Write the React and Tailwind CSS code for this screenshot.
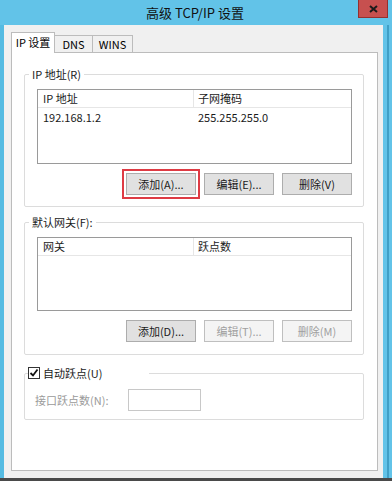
const FONT = { fontFamily: '"Noto Sans CJK SC", "Noto Sans", sans-serif' };

const Btn = ({ label, disabled, highlight }) => (
  <button
    type="button"
    className={`w-[70px] h-[22px] border text-[11px] leading-none flex items-center justify-center ${
      disabled
        ? "bg-[#f4f4f4] border-[#bfbfbf] text-[#a0a0a0]"
        : "bg-[#e1e1e1] border-[#adadad] text-[#1a1a1a]"
    } ${highlight ? "outline-2 outline-solid outline-offset-[2px] outline-[#de3b44]" : ""}`}
  >
    {label}
  </button>
);

const ListBox = ({ cols, rows, height }) => (
  <div className={`w-[315px] ${height} border border-[#9a9a9a] bg-white`}>
    <div className="flex h-[18px] border-b border-[#e6e6e6] text-[11px] text-[#1a1a1a]">
      <div className="w-[156px] border-r border-[#e6e6e6] pl-[5px] flex items-center">{cols[0]}</div>
      <div className="flex-1 pl-[4px] flex items-center">{cols[1]}</div>
    </div>
    {rows.map((r, i) => (
      <div key={i} className="flex h-[18px] text-[11px] text-[#1a1a1a]">
        <div className="w-[156px] pl-[5px] flex items-center">{r[0]}</div>
        <div className="flex-1 pl-[4px] flex items-center">{r[1]}</div>
      </div>
    ))}
  </div>
);

const Group = ({ legend, children, className = "" }) => (
  <fieldset className={`w-[340px] border border-[#dcdcdc] rounded-[2px] ${className}`}>
    <legend className="ml-[4px] px-[3px] text-[11px] leading-[16px] text-[#1a1a1a]">{legend}</legend>
    {children}
  </fieldset>
);

export default function App() {
  return (
    <div className="w-[392px] h-[484px] bg-white overflow-hidden" style={FONT}>
      <div className="h-[481px] flex flex-col border-b-[3px] border-[#4a4a4a]">
        {/* title bar */}
        <div className="h-[25px] bg-[#62c3e8] relative flex items-center justify-center">
          <span className="text-[13px] text-[#111] pr-[2px]">高级 TCP/IP 设置</span>
          <div className="absolute top-0 right-[4px] w-[30px] h-[18px] bg-[#c7504f] border border-[#94302f] border-t-0 flex items-center justify-center">
            <svg width="9" height="8" viewBox="0 0 9 8">
              <path d="M1 1 L8 7 M8 1 L1 7" stroke="#1b1b1b" strokeWidth="2" />
            </svg>
          </div>
        </div>

        <div className="flex-1 flex">
          <div className="w-[4px] bg-[#55bbe2]" />
          <div className="flex-1 bg-[#f0f0f0] pl-[7px] pr-[5px] pt-[7px] pb-[7px] flex flex-col">
            {/* tabs */}
            <div className="flex items-end h-[21px] relative z-10 -mb-px">
              <div className="h-[21px] w-[44px] bg-white border border-b-0 border-[#bcbcbc] text-[11px] flex items-center justify-center pb-[2px]">
                IP 设置
              </div>
              <div className="h-[18px] w-[39px] -ml-px bg-[#f0f0f0] border border-[#bcbcbc] text-[11px] flex items-center justify-center">
                DNS
              </div>
              <div className="h-[18px] w-[41px] -ml-px bg-[#f0f0f0] border border-[#bcbcbc] text-[11px] flex items-center justify-center">
                WINS
              </div>
            </div>

            {/* panel */}
            <div className="flex-1 bg-white border border-[#bcbcbc] pl-[12px] pt-[13px]">
              <Group legend="IP 地址(R)">
                <div className="pl-[11px] pr-[11px] pt-[7px] pb-[11px] flex flex-col items-end">
                  <ListBox cols={["IP 地址", "子网掩码"]} rows={[["192.168.1.2", "255.255.255.0"]]} height="h-[75px]" />
                  <div className="flex gap-[8px] mt-[9px]">
                    <Btn label="添加(A)..." highlight />
                    <Btn label="编辑(E)..." />
                    <Btn label="删除(V)" />
                  </div>
                </div>
              </Group>

              <Group legend="默认网关(F):" className="mt-[7px]">
                <div className="pl-[11px] pr-[11px] pt-[7px] pb-[12px] flex flex-col items-end">
                  <ListBox cols={["网关", "跃点数"]} rows={[]} height="h-[74px]" />
                  <div className="flex gap-[8px] mt-[9px]">
                    <Btn label="添加(D)..." />
                    <Btn label="编辑(T)..." disabled />
                    <Btn label="删除(M)" disabled />
                  </div>
                </div>
              </Group>

              <Group
                className="mt-[10px]"
                legend={
                  <span className="flex items-center gap-[3px] pr-[44px] -ml-[4px]">
                    <span className="w-[12px] h-[12px] border border-[#333] bg-white flex items-center justify-center">
                      <svg width="10" height="10" viewBox="0 0 10 10">
                        <path d="M1.5 5 L4 7.5 L8.5 1.5" fill="none" stroke="#111" strokeWidth="1.8" />
                      </svg>
                    </span>
                    自动跃点(U)
                  </span>
                }
              >
                <div className="pl-[10px] pt-[8px] pb-[8px] flex items-center">
                  <span className="w-[93px] text-[11px] text-[#9a9a9a]">接口跃点数(N):</span>
                  <div className="w-[73px] h-[22px] border border-[#c8c8c8] bg-white" />
                </div>
              </Group>
            </div>
          </div>
          <div className="w-[9px] bg-[#62c3e8] flex justify-end">
            <div className="w-[2px] bg-[#3f9fc6] mr-[3px]" />
          </div>
        </div>
      </div>
    </div>
  );
}
